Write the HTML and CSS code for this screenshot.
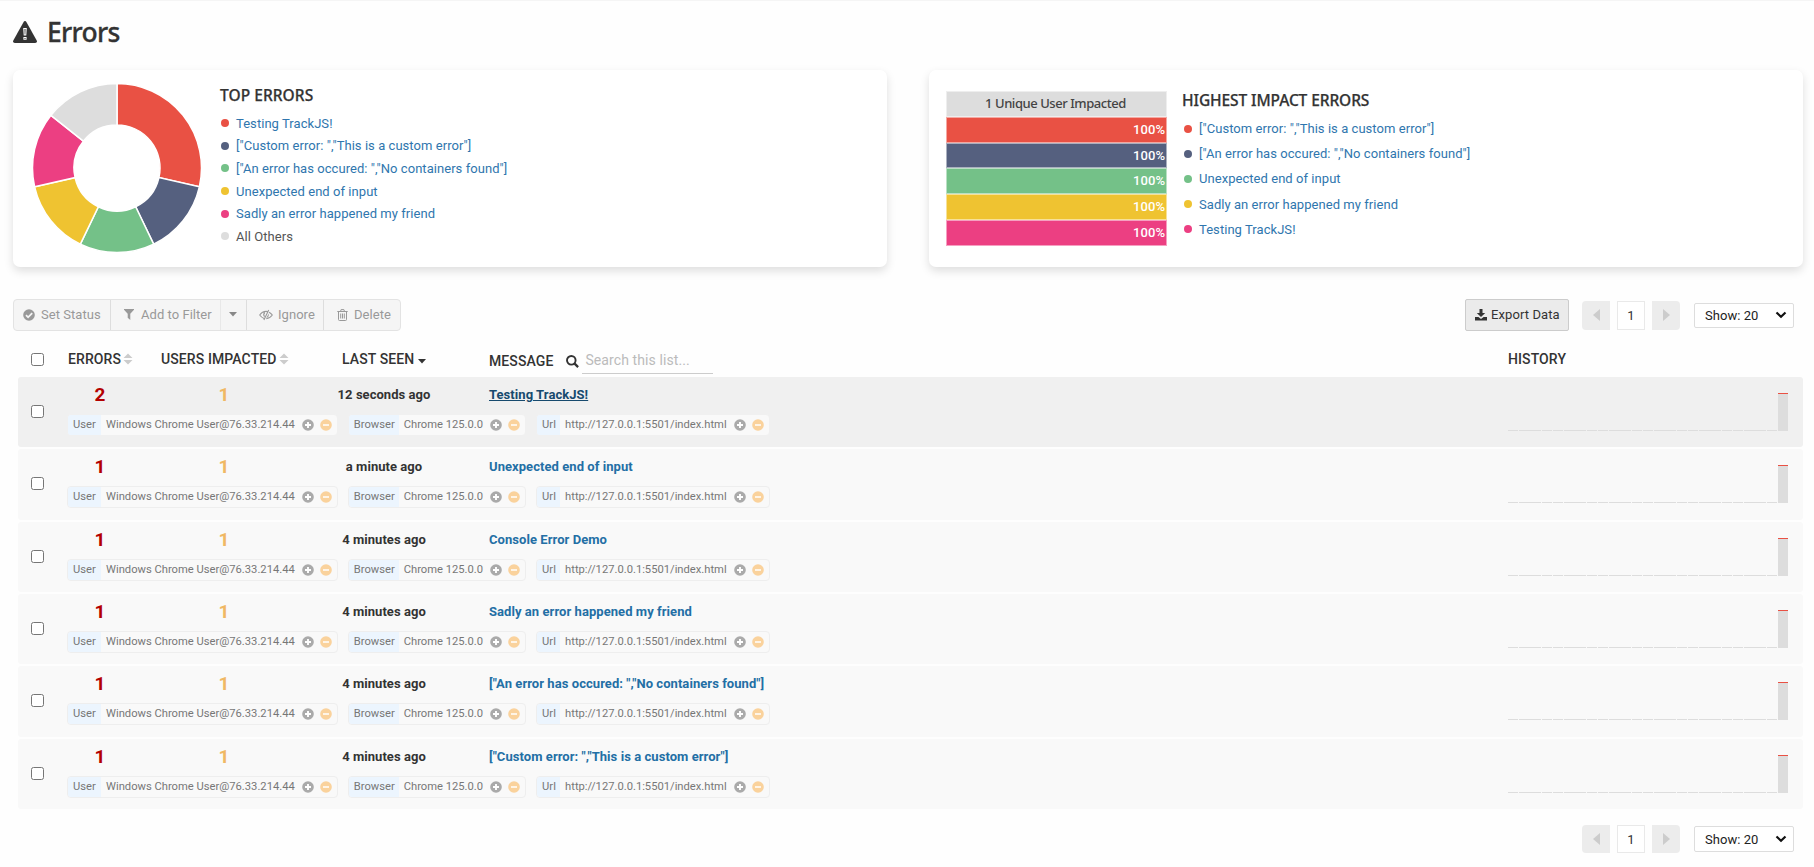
FILE: index.html
```html
<!DOCTYPE html>
<html lang="en">
<head>
<meta charset="utf-8">
<title>Errors</title>
<link rel="stylesheet" href="styles.css">
</head>
<body>
<svg class="defs" width="0" height="0" aria-hidden="true">
  <symbol id="i-plus" viewBox="0 0 12 12"><circle cx="6" cy="6" r="5.8" fill="#aaa"/><path d="M6 3v6M3 6h6" stroke="#fff" stroke-width="1.9"/></symbol>
  <symbol id="i-minus" viewBox="0 0 12 12"><circle cx="6" cy="6" r="5.8" fill="#fad29c"/><path d="M3 6h6" stroke="#fff" stroke-width="1.7"/></symbol>
  <symbol id="i-sort" viewBox="0 0 10 12"><path d="M.5 5 5 .5 9.500 5zM.5 7 5 11.500 9.500 7z" fill="#ccc"/></symbol>
  <symbol id="i-spark" viewBox="0 0 280 38"><path d="M0 37.500h269" stroke="#ddd" stroke-dasharray="10 1 22 1 10 1"/><path d="M270 0h10v38h-10z" fill="#ddd"/><path d="M270 0h10v1h-10z" fill="#e95144"/></symbol>
  <symbol id="i-left" viewBox="0 0 7 12"><path d="M7 0v12L0 6z" fill="#ccc"/></symbol>
  <symbol id="i-right" viewBox="0 0 7 12"><path d="M0 0v12l7-6z" fill="#ccc"/></symbol>
  <symbol id="i-chev" viewBox="0 0 12 8"><path d="M1.500 1.500 6 5.700l4.500-4.200" fill="none" stroke="#111" stroke-width="2.200"/></symbol>
</svg>

<h1 class="title">
  <svg class="warn" viewBox="0 0 24 22"><path d="M12 0q.9 0 1.400.9L23.700 19.500q.9 2.300-1.500 2.500H1.800q-2.400-.2-1.500-2.500L10.600.9Q11.100 0 12 0z" fill="#333"/><path d="M10.200 7h3.600l-.5 7.500h-2.600zM10.400 16h3.200v2.800h-3.200z" fill="#fff"/><path d="M11.500 8h1l-.2 5.500h-.6zM11.500 16.900h1v1h-1z" fill="#333"/></svg>
  <span>Errors</span>
</h1>

<section class="cards">
  <div class="card card-top">
    <svg id="donut" class="donut" viewBox="-85 -85 170 170"></svg>
    <div class="legend">
      <h2><span class="t1">TOP ERRORS</span></h2>
      <ul>
        <li class="red"><a>Testing TrackJS!</a></li>
        <li class="navy"><a>["Custom error: ","This is a custom error"]</a></li>
        <li class="green"><a>["An error has occured: ","No containers found"]</a></li>
        <li class="yellow"><a>Unexpected end of input</a></li>
        <li class="pink"><a>Sadly an error happened my friend</a></li>
        <li class="gray">All Others</li>
      </ul>
    </div>
  </div>
  <div class="card card-impact">
    <div class="bars">
      <div class="bar head"><span>1 Unique User Impacted</span></div>
      <div class="bar red">100%</div>
      <div class="bar navy">100%</div>
      <div class="bar green">100%</div>
      <div class="bar yellow">100%</div>
      <div class="bar pink">100%</div>
    </div>
    <div class="legend">
      <h2><span class="t2">HIGHEST IMPACT ERRORS</span></h2>
      <ul>
        <li class="red"><a>["Custom error: ","This is a custom error"]</a></li>
        <li class="navy"><a>["An error has occured: ","No containers found"]</a></li>
        <li class="green"><a>Unexpected end of input</a></li>
        <li class="yellow"><a>Sadly an error happened my friend</a></li>
        <li class="pink"><a>Testing TrackJS!</a></li>
      </ul>
    </div>
  </div>
</section>

<div class="toolbar">
  <div class="group">
    <span class="btn b1"><svg viewBox="0 0 12 12" width="12" height="12"><circle cx="6" cy="6" r="5.800" fill="#999"/><path d="M3 6.200l2.100 2.100L9.200 4.200" stroke="#f5f5f5" stroke-width="1.800" fill="none"/></svg>Set Status</span>
    <span class="btn b2"><svg viewBox="0 0 10 11" width="10" height="11"><path d="M0 0h10v.8L6.300 4.700V11L3.700 8.700v-4L0 .8z" fill="#999"/></svg>Add to Filter</span>
    <span class="btn b3"><svg viewBox="0 0 8 5" width="8" height="5"><path d="M0 0h8L4 4.500z" fill="#888"/></svg></span>
    <span class="btn b4"><svg viewBox="0 0 14 12" width="14" height="12"><path d="M5 9.500Q2.500 8.500.7 6 3.200 2.400 7 2.400q.8 0 1.500.2M10 3.200q2 1 3.300 2.800Q11 9.400 7.300 9.600M9.700 1 4.900 11M5.600 7.600Q3.700 5.500 5.800 3.500" fill="none" stroke="#999" stroke-width="1.100"/><path d="M9.800 4.500 7.300 9Q10.300 8 9.800 4.500z" fill="#999"/></svg>Ignore</span>
    <span class="btn b5"><svg viewBox="0 0 11 12" width="11" height="12"><path d="M.3 2.500h10.400M3.500 2.500l.6-1.900h2.800l.6 1.900M1.500 2.500v8q0 1 1 1h6q1 0 1-1v-8M3.700 4.500v5M5.500 4.500v5M7.300 4.500v5" fill="none" stroke="#999"/></svg>Delete</span>
  </div>
  <div class="right">
    <span class="export"><svg viewBox="0 0 12 12" width="12" height="12"><path d="M4.500 0h3v4h2.700L6 8 1.800 4h2.700zM0 8h3.400L6 10l2.600-2H12v3.500H0z" fill="#333"/></svg>Export Data</span>
    <span class="pg l"><svg width="7" height="12"><use href="#i-left"/></svg></span>
    <span class="pg cur">1</span>
    <span class="pg r"><svg width="7" height="12"><use href="#i-right"/></svg></span>
    <span class="select">Show: 20<svg width="12" height="8"><use href="#i-chev"/></svg></span>
  </div>
</div>

<div class="thead">
  <span class="c-check"><i class="box"></i></span>
  <span class="c-err">ERRORS<svg width="10" height="12"><use href="#i-sort"/></svg></span>
  <span class="c-users">USERS IMPACTED<svg width="10" height="12"><use href="#i-sort"/></svg></span>
  <span class="c-seen">LAST SEEN<svg class="down" width="8" height="5" viewBox="0 0 8 5"><path d="M0 0h8L4 4.500z" fill="#333"/></svg></span>
  <span class="c-msg">MESSAGE<svg class="mag" width="13" height="13" viewBox="0 0 13 13"><circle cx="5.300" cy="5.300" r="4.300" fill="none" stroke="#333" stroke-width="1.900"/><path d="M8.400 8.400l3.700 3.700" stroke="#333" stroke-width="2.300"/></svg><span class="search">Search this list...</span></span>
  <span class="c-hist">HISTORY</span>
</div>
<div id="rows" class="rows"></div>

<div class="footer right">
  <span class="pg l"><svg width="7" height="12"><use href="#i-left"/></svg></span>
  <span class="pg cur">1</span>
  <span class="pg r"><svg width="7" height="12"><use href="#i-right"/></svg></span>
  <span class="select">Show: 20<svg width="12" height="8"><use href="#i-chev"/></svg></span>
</div>
<script src="app.js"></script>
</body>
</html>
```
FILE: styles.css
```css
* { box-sizing: border-box; }
body { margin: 0; width: 1814px; height: 867px; overflow: hidden; background: #fefefe; border-top: 1px solid #f5f5f5; font-family: Roboto, sans-serif; font-size: 13px; letter-spacing: .04px; color: #333; }
svg { display: block; flex: none; }
.defs { position: absolute; }
.title { display: flex; align-items: center; height: 62px; margin: 0 0 7px; padding-left: 13px; font: 500 26.500px/40px "Noto Sans", sans-serif; -webkit-text-stroke: .3px #333; }
.title span { margin-left: 10px; letter-spacing: -.7px; }
.warn { width: 24px; height: 22px; }

.cards { display: flex; gap: 42px; padding-left: 13px; }
.card { display: flex; width: 874px; height: 197px; border-radius: 7px; background: #fff; box-shadow: 0 4px 10px rgba(0,0,0,.13); }
.donut { width: 170px; height: 170px; margin: 13px 17.500px 0 18.500px; }
.legend h2 { margin: 0; font: 500 15.500px/20px "Noto Sans", sans-serif; -webkit-text-stroke: .25px #333; white-space: nowrap; }
.legend ul { list-style: none; margin: 0; padding: 0; }
.legend li { display: flex; align-items: center; color: #555; letter-spacing: .05px; white-space: nowrap; }
.legend li::before { content: ""; width: 8px; height: 8px; margin-right: 7px; border-radius: 50%; background: var(--c); }
.legend a { color: #2f76ae; }
.card-top .legend { padding: 15px 0 0 1px; }
.card-top .legend li { height: 22.600px; padding-left: 1px; }
.card-top .legend ul { padding-top: 7px; }
.card-impact .legend { padding: 20px 0 0 15px; }
.card-impact .legend li { height: 25.200px; padding-left: 2px; }
.card-impact .legend ul { padding-top: 6px; }
.t1 { letter-spacing: .05px; }
.t2 { letter-spacing: -.1px; }
.red { --c: #e95144; }
.navy { --c: #55607f; }
.green { --c: #74c188; }
.yellow { --c: #efc331; }
.pink { --c: #ec3f82; }
.gray { --c: #ddd; }
.bars { width: 221px; margin: 21px 0 0 17px; }
.bar { height: 25.800px; padding-right: 1px; border: 1px solid rgba(255,255,255,.5); background: var(--c); color: #fff; font-weight: 500; line-height: 23px; text-align: right; }
.bar.head { --c: #ddd; padding: 0 2px 0 0; color: #444; font-family: "Noto Sans", sans-serif; text-align: center; }
.bar.head span { letter-spacing: -.45px; }

.toolbar { display: flex; justify-content: space-between; height: 32px; margin: 32px 20px 0 13px; }
.group { display: flex; border: 1px solid #e3e3e3; border-radius: 4px; background: #f5f5f5; overflow: hidden; color: #999; }
.btn { display: flex; align-items: center; border-right: 1px solid #ddd; padding: 0 0 1px 9px; white-space: nowrap; }
.btn svg { margin-right: 6px; }
.b1 { width: 97px; }
.b2 { width: 110px; padding-left: 13px; border-color: #e8e8e8; }
.b2 svg { margin-right: 7px; }
.b3 { width: 26px; padding-left: 8px; }
.b4 { width: 77px; padding-left: 12px; }
.b4 svg { margin-right: 5px; }
.b5 { width: 76px; padding-left: 13px; border: 0; }
.right { display: flex; align-items: center; }
.export { display: flex; align-items: center; width: 104px; height: 32px; margin-right: 13px; padding: 0 0 1px 9px; border: 1px solid #ccc; border-radius: 2px; background: #ebebeb; letter-spacing: .1px; white-space: nowrap; }
.export svg { margin-right: 4px; }
.pg { display: flex; align-items: center; justify-content: center; width: 28px; height: 29px; margin-right: 7px; background: #ececec; }
.pg.l { border-radius: 4px 0 0 4px; }
.pg.r { border-radius: 0 4px 4px 0; margin-right: 14px; }
.pg.cur { background: #fff; border: 1px solid #e9e9e9; }
.select { display: flex; align-items: center; justify-content: space-between; width: 100px; height: 25px; padding: 0 6px 0 10px; border: 1px solid #ddd; border-radius: 2px; background: #fff; color: #222; font-size: 13px; }
.footer { justify-content: flex-end; margin: 16px 20px 0; }
.footer .pg { height: 28px; }
.footer .select { height: 26px; }

.thead { display: grid; grid-template-columns: 50px 93px 181px 147px 1019px 1fr; align-items: center; height: 46px; padding: 10px 0 0 18px; font-size: 14px; font-weight: 500; letter-spacing: .1px; }
.thead > span { display: flex; align-items: center; white-space: nowrap; }
.thead .c-err svg, .thead .c-users svg { margin-left: 2px; }
.thead .down { margin: 5px 0 0 4px; }
.mag { margin: 0 3px 0 13px; }
.thead .c-msg { padding: 4px 0 0; }
.search { width: 131px; height: 26px; padding: 0 3px; border-bottom: 1px solid #ccc; line-height: 24px; color: #bbb; font-weight: 400; }
.box { width: 13px; height: 13px; border: 1px solid #767676; border-radius: 2.500px; background: #fff; }
.c-check { padding-left: 13px; }
.rows { display: grid; grid-template-rows: 70px 71px 70px 70px 71px 70px; gap: 2px; margin: 0 11px 0 18px; }
.row { display: grid; grid-template-columns: 49px 1fr 295px; border-radius: 3px; background: #f9f9f9; }
.row > .c-check { display: flex; align-items: center; padding-bottom: 2px; }
.row > .c-hist { padding-top: 16px; }
.hist { width: 280px; height: 38px; shape-rendering: crispEdges; }
.top { display: grid; grid-template-columns: 66px 182px 138px 1fr; height: 37px; line-height: 36px; }
.top > * { text-align: center; font-weight: 700; white-space: nowrap; }
.top .n { font-size: 19px; color: #b30000; }
.top .u { font-size: 19px; color: #f0b864; }
.top a { padding-left: 36px; text-align: left; letter-spacing: .06px; color: #236fa5; }
.tags { display: flex; gap: 10px; }
.tag { display: flex; height: 22px; border: 1px solid #eee; border-radius: 4px; background: #f9f9f9; overflow: hidden; font-size: 11.200px; letter-spacing: 0; line-height: 20px; color: #777; white-space: nowrap; }
.tag b { width: 33px; padding-left: 5px; background: #ecf5fe; font-weight: 400; }
.tag-browser b { width: 50px; }
.tag-url b { width: 23px; }
.tag span { padding-left: 5px; }
.tag svg { width: 12px; height: 12px; margin: 4px 0 0 6px; }
.tag span + svg { margin-left: 7px; }
.tag svg:last-child { margin-right: 5px; }
.row.hover { background: #f0f0f0; }
.row.hover .tag { border-color: #f0f0f0; }
.row.hover a { color: #174a6e; text-decoration: underline; }
```
FILE: app.js
```javascript
const rows = [
  [2, '12 seconds ago', 'Testing TrackJS!'],
  [1, 'a minute ago', 'Unexpected end of input'],
  [1, '4 minutes ago', 'Console Error Demo'],
  [1, '4 minutes ago', 'Sadly an error happened my friend'],
  [1, '4 minutes ago', '["An error has occured: ","No containers found"]'],
  [1, '4 minutes ago', '["Custom error: ","This is a custom error"]'],
];
const tag = (name, k, v) => `<div class="tag tag-${name}"><b>${k}</b><span>${v}</span><svg><use href="#i-plus"/></svg><svg><use href="#i-minus"/></svg></div>`;
document.getElementById('rows').innerHTML = rows.map(([n, seen, msg], i) => `
  <div class="row${i ? '' : ' hover'}">
    <span class="c-check"><i class="box"></i></span>
    <div class="main">
      <div class="top"><span class="n">${n}</span><span class="u">1</span><span>${seen}</span><a><span>${msg}</span></a></div>
      <div class="tags">${tag('user', 'User', 'Windows Chrome User@76.33.214.44')}${tag('browser', 'Browser', 'Chrome 125.0.0')}${tag('url', 'Url', 'http://127.0.0.1:5501/index.html')}</div>
    </div>
    <span class="c-hist"><svg class="hist"><use href="#i-spark"/></svg></span>
  </div>`).join('');

const slices = [[2, '#e95144'], [1, '#55607f'], [1, '#74c188'], [1, '#efc331'], [1, '#ec3f82'], [1, '#ddd']];
let at = 0;
const pt = (r, t) => `${(r * Math.sin(t)).toFixed(2)} ${(-r * Math.cos(t)).toFixed(2)}`;
document.getElementById('donut').innerHTML = slices.map(([n, fill]) => {
  const a = at / 7 * 2 * Math.PI;
  at += n;
  const b = at / 7 * 2 * Math.PI;
  return `<path d="M${pt(84.5, a)}A84.5 84.5 0 0 1 ${pt(84.5, b)}L${pt(43, b)}A43 43 0 0 0 ${pt(43, a)}Z" fill="${fill}" stroke="#fff" stroke-width="1.5"/>`;
}).join('');
```
